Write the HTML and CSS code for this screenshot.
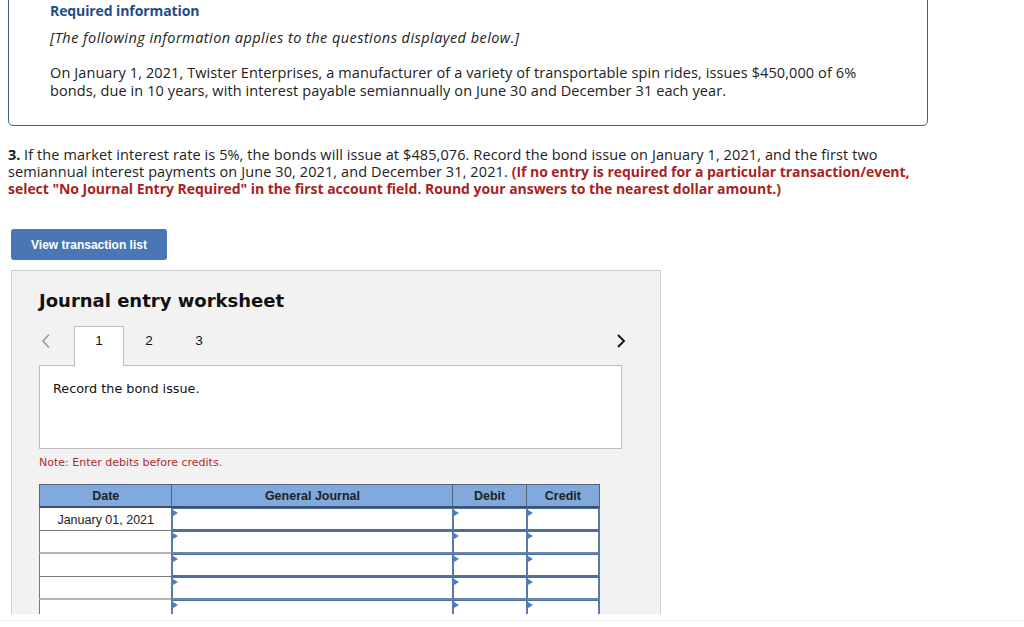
FILE: index.html
```html
<!DOCTYPE html>
<html>
<head>
<meta charset="utf-8">
<link rel="stylesheet" href="styles.css">
</head>
<body>
<div class="page">
  <div class="info">
    <h1 class="info-title">Required information</h1>
    <p class="info-note">[The following information applies to the questions displayed below.]</p>
    <p class="info-text">On January 1, 2021, Twister Enterprises, a manufacturer of a variety of transportable spin rides, issues $450,000 of 6% bonds, due in 10 years, with interest payable semiannually on June 30 and December 31 each year.</p>
  </div>

  <p class="question"><b>3.</b> If the market interest rate is 5%, the bonds will issue at $485,076. Record the bond issue on January 1, 2021, and the first two semiannual interest payments on June 30, 2021, and December 31, 2021. <span class="red">(If no entry is required for a particular transaction/event, select "No Journal Entry Required" in the first account field. Round your answers to the nearest dollar amount.)</span></p>

  <button class="view-btn">View transaction list</button>

  <div class="worksheet">
    <h2 class="ws-title">Journal entry worksheet</h2>
    <div class="tabs-row">
      <span class="nav prev"><svg width="10" height="16" viewBox="0 0 10 16"><path d="M8 1.5 L2 8 L8 14.5" stroke="#9a9a9a" stroke-width="1.6" fill="none"/></svg></span>
      <span class="tab active">1</span>
      <span class="tab">2</span>
      <span class="tab">3</span>
      <span class="spacer"></span>
      <span class="nav next"><svg width="10" height="14" viewBox="0 0 10 14"><path d="M2 1 L8 7 L2 13" stroke="#111" stroke-width="1.9" fill="none"/></svg></span>
    </div>
    <div class="entry-box">Record the bond issue.</div>
    <p class="note">Note: Enter debits before credits.</p>
    <table class="journal">
      <thead>
        <tr><th class="c-date">Date</th><th class="c-gj">General Journal</th><th class="c-dr">Debit</th><th class="c-cr">Credit</th></tr>
      </thead>
      <tbody>
        <tr><td class="date">January 01, 2021</td><td class="in"></td><td class="in"></td><td class="in last"></td></tr>
        <tr class="lt"><td class="date"></td><td class="in"></td><td class="in"></td><td class="in last"></td></tr>
        <tr><td class="date"></td><td class="in"></td><td class="in"></td><td class="in last"></td></tr>
        <tr class="lt"><td class="date"></td><td class="in"></td><td class="in"></td><td class="in last"></td></tr>
        <tr><td class="date"></td><td class="in"></td><td class="in"></td><td class="in last"></td></tr>
      </tbody>
    </table>
  </div>
</div>
<div class="bottom-rule"></div>
</body>
</html>
```
FILE: styles.css
```css
html, body {
  margin: 0;
  padding: 0;
  background: #fff;
}
body {
  font-family: "Open Sans", Lato, Arial, sans-serif;
  color: #222;
}
.page {
  height: 614px;
  overflow: hidden;
  padding: 0 8px;
}
.info {
  width: 920px;
  box-sizing: border-box;
  margin-top: -20px;
  border: 1px solid #3e5f90;
  border-radius: 5px;
  padding: 21px 40px 25px 41px;
}
.info-title {
  margin: 0;
  font-size: 14px;
  line-height: 18px;
  font-weight: 700;
  letter-spacing: -0.1px;
  color: #1f4c88;
}
.info-note {
  margin: 9px 0 0;
  font-size: 14.5px;
  line-height: 18px;
  font-style: italic;
  letter-spacing: 0.45px;
}
.info-text {
  margin: 17px 0 0;
  max-width: 825px;
  font-size: 14.5px;
  line-height: 18px;
  letter-spacing: 0.1px;
}
.question {
  width: 920px;
  margin: 20px 0 0;
  font-size: 14.5px;
  line-height: 17px;
  letter-spacing: 0.1px;
}
.question b {
  font-weight: 700;
  letter-spacing: -0.1px;
}
.red {
  color: #a91f22;
  font-weight: 700;
  font-size: 14px;
  letter-spacing: -0.04px;
}
.view-btn {
  display: block;
  margin: 32px 0 0 3px;
  width: 156px;
  height: 31px;
  border: 0;
  border-radius: 3px;
  background: #4a76b4;
  color: #fff;
  font-family: "Liberation Sans", Arial, sans-serif;
  font-weight: 700;
  font-size: 12px;
  padding: 0;
}
.worksheet {
  margin: 10px 0 0 3px;
  width: 650px;
  box-sizing: border-box;
  background: #f2f2f2;
  border: 1px solid #d0d0d0;
  padding: 19px 0 40px 27px;
  height: 400px;
}
.ws-title {
  margin: 0;
  font-family: "DejaVu Sans", Verdana, sans-serif;
  font-size: 18px;
  line-height: 22px;
  font-weight: 700;
  color: #111;
}
.tabs-row {
  display: flex;
  align-items: stretch;
  width: 583px;
  height: 40px;
  margin-top: 14px;
  position: relative;
  z-index: 1;
}
.nav {
  display: flex;
  align-items: flex-start;
}
.prev {
  width: 35px;
  padding: 7px 0 0 2px;
  box-sizing: border-box;
}
.next {
  margin-right: -8px;
  width: 14px;
  padding-top: 8px;
}
.spacer { flex: 1; }
.tab {
  width: 50px;
  box-sizing: border-box;
  display: flex;
  align-items: flex-start;
  justify-content: center;
  padding-top: 7px;
  font-family: "Liberation Sans", Arial, sans-serif;
  font-size: 13.5px;
  line-height: 16px;
  color: #111;
}
.tab.active {
  background: #fff;
  border: 1px solid #bdbdbd;
  border-bottom: 0;
  padding-top: 6px;
  height: 40px;
}
.entry-box {
  width: 583px;
  height: 84px;
  box-sizing: border-box;
  margin-top: -1px;
  background: #fff;
  border: 1px solid #bdbdbd;
  padding: 14px 13px;
  font-family: "DejaVu Sans", Verdana, sans-serif;
  font-size: 12.8px;
  line-height: 17px;
  color: #111;
}
.note {
  margin: 7px 0 0;
  font-family: "DejaVu Sans", Verdana, sans-serif;
  font-size: 11px;
  line-height: 14px;
  color: #b02a2a;
}
.journal {
  margin-top: 14px;
  border-collapse: separate;
  border-spacing: 0;
  width: 561px;
  font-family: "Liberation Sans", Arial, sans-serif;
  font-size: 12px;
}
.journal thead tr { height: 24px; }
.journal tbody tr { height: 23px; }
.journal th {
  background: #80a9dd;
  color: #222;
  font-weight: 700;
  font-size: 12.5px;
  border-top: 1px solid #566478;
  border-left: 1px solid #566478;
  border-bottom: 2px solid #3f5068;
  padding: 0;
}
.journal th.c-cr { border-right: 1px solid #566478; }
.c-date { width: 131px; }
.c-gj { width: 279px; }
.c-dr { width: 72px; }
.c-cr { width: 72px; }
.journal td {
  padding: 0;
  background: #fff;
}
.journal td.date {
  text-align: center;
  color: #222;
  font-size: 12.5px;
  padding-top: 2px;
  border-left: 1px solid #777;
  border-bottom: 1px solid #777;
}
.journal tr.lt td.date { border-bottom: 2px solid #b5b5b5; }
.journal td.in {
  position: relative;
  border-left: 2px solid #5a7aa8;
  border-top: 1px solid #4a6da3;
  border-bottom: 2px solid #4a6da3;
}
.journal tr.lt td.in { border-bottom: 2px solid #6f86a8; }
.journal td.in.last { border-right: 2px solid #5a7aa8; }
.journal td.in::before {
  content: "";
  position: absolute;
  left: 0;
  top: 1px;
  border-left: 5px solid #4a7cc2;
  border-top: 3px solid transparent;
  border-bottom: 3px solid transparent;
}
.bottom-rule {
  margin-top: 6px;
  border-top: 1px solid #efefef;
}
```
